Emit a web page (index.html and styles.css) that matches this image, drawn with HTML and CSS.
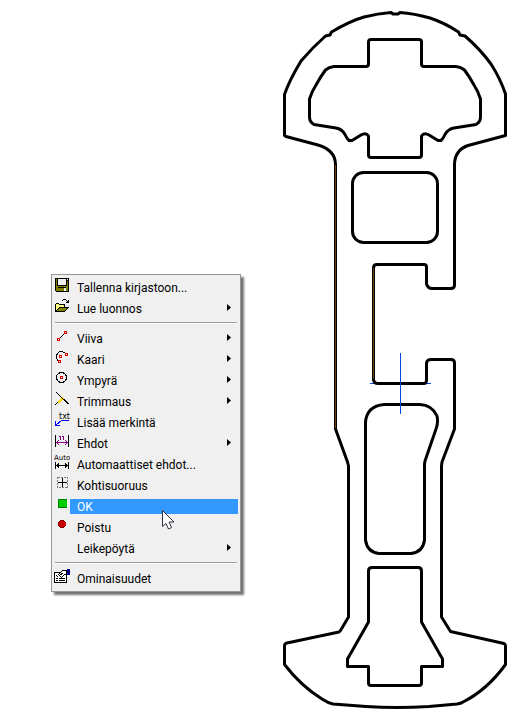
FILE: index.html
```html
<!DOCTYPE html>
<html lang="fi">
<head>
<meta charset="UTF-8">
<meta name="viewport" content="width=device-width, initial-scale=1.0">
<title>Luonnos</title>
<link rel="stylesheet" href="styles.css">
</head>
<body>
<main class="workspace">
    <div class="menu">
        <ul class="menu-list">
            <li><button type="button" class="item">
                <svg class="icon" viewBox="0 0 16 16"><path d="M1 1h14v14H2l-1-1z"/><path fill="#808000" d="M2 2h1v7h10V4h1v10H2z"/><path fill="#f0f0f0" d="M4 2h8v6H4zM13 2h1v1h-1zM10 11h2v3h-2z"/><path d="M4 10h8v1H4z"/></svg>
                <span class="label">Tallenna kirjastoon...</span>
            </button></li>
            <li><button type="button" class="item">
                <svg class="icon" viewBox="0 0 16 16"><path d="M1 6h1V5h3v1h6v3h4v1h-1v1h-1v1h-1v1h-1v1H1z"/><path fill="#ffff80" d="M2 6h3v1h5v2H5v1H4v1H3v1H2z"/><path fill="#808000" d="M5 10h8v1h-1v1h-1v1H3v-1h1v-1h1z"/><path d="M8 2h1V1h3v1h1v1h1V2h1v3h-3V4h1V3h-1V2H9v1H8z"/></svg>
                <span class="label">Lue luonnos</span>
                <svg class="arrow" viewBox="0 0 4 7"><path d="M0 0l4 3.500L0 7z"/></svg>
            </button></li>
            <li class="separator"></li>
            <li><button type="button" class="item">
                <svg class="icon" viewBox="0 0 16 16"><path class="line" d="M6 10l4-4"/><path class="node" d="M10.500 3.500h2v2h-2zM3.500 10.500h2v2h-2z"/></svg>
                <span class="label">Viiva</span>
                <svg class="arrow" viewBox="0 0 4 7"><path d="M0 0l4 3.500L0 7z"/></svg>
            </button></li>
            <li><button type="button" class="item">
                <svg class="icon" viewBox="0 0 16 16"><path class="line" d="M4 11.500L2.500 9V6L5 3l3-.5L11 4"/><path class="node" d="M11.500 4.500h2v2h-2zM5.500 6.500h2v2h-2zM4.500 11.500h2v2h-2z"/></svg>
                <span class="label">Kaari</span>
                <svg class="arrow" viewBox="0 0 4 7"><path d="M0 0l4 3.500L0 7z"/></svg>
            </button></li>
            <li><button type="button" class="item">
                <svg class="icon" viewBox="0 0 16 16"><circle class="line" cx="7.500" cy="7.500" r="5"/><path class="node" d="M6.500 6.500h2v2h-2z"/></svg>
                <span class="label">Ympyrä</span>
                <svg class="arrow" viewBox="0 0 4 7"><path d="M0 0l4 3.500L0 7z"/></svg>
            </button></li>
            <li><button type="button" class="item">
                <svg class="icon" viewBox="0 0 16 16"><path stroke="#ffd800" stroke-width="2" d="M4 12l5-5"/><path class="line" d="M2.500 1.500l12 11.500M1 14l3-3"/></svg>
                <span class="label">Trimmaus</span>
                <svg class="arrow" viewBox="0 0 4 7"><path d="M0 0l4 3.500L0 7z"/></svg>
            </button></li>
            <li><button type="button" class="item">
                <svg class="icon" viewBox="0 0 16 16"><text class="tiny" x="5" y="7">txt</text><path class="blue" d="M15 8.500H7.500L2 13M1.500 9v4.500H6"/></svg>
                <span class="label">Lisää merkintä</span>
            </button></li>
            <li><button type="button" class="item">
                <svg class="icon" viewBox="0 0 16 16"><path class="line" d="M1.500 2v12M14.500 2v12"/><path class="purple" d="M2 9.500h12M5 7L2.500 9.500 5 12M11 7l2.500 2.500L11 12M5 3.500h1.500V7M8 3.500h1.500V7"/></svg>
                <span class="label">Ehdot</span>
                <svg class="arrow" viewBox="0 0 4 7"><path d="M0 0l4 3.500L0 7z"/></svg>
            </button></li>
            <li><button type="button" class="item">
                <svg class="icon" viewBox="0 0 16 16"><text class="tiny wide" x="0" y="6">Auto</text><path class="line" d="M1.500 8v7M14.500 8v7M2 11.500h12M5 9.500l-2 2 2 2M11 9.500l2 2-2 2"/></svg>
                <span class="label">Automaattiset ehdot...</span>
            </button></li>
            <li><button type="button" class="item">
                <svg class="icon" viewBox="0 0 16 16"><path class="dashed" d="M3.500 2.500h10v10h-10z"/><path class="line" d="M8.500 3v9M4 7.500h9"/></svg>
                <span class="label">Kohtisuoruus</span>
            </button></li>
            <li><button type="button" class="item selected">
                <svg class="icon" viewBox="0 0 16 16"><path fill="#008000" d="M4 3h9v9H4z"/><path fill="#00cc00" d="M5 4h8v7H5z"/></svg>
                <span class="label">OK</span>
            </button></li>
            <li><button type="button" class="item">
                <svg class="icon" viewBox="0 0 16 16"><path fill="#800000" d="M6 3h4v1h1v1h1v4h-1v1h-1v1H6v-1H5V9H4V5h1V4h1z"/><path fill="#cc0000" d="M6 4h4v1h2v4h-1v1H6V9H5V5h1z"/></svg>
                <span class="label">Poistu</span>
            </button></li>
            <li><button type="button" class="item">
                <span class="icon"></span>
                <span class="label">Leikepöytä</span>
                <svg class="arrow" viewBox="0 0 4 7"><path d="M0 0l4 3.500L0 7z"/></svg>
            </button></li>
            <li class="separator"></li>
            <li><button type="button" class="item">
                <svg class="icon" viewBox="0 0 16 16"><path fill="#fff" stroke="#000" d="M.5 4.500h12v10H.5z"/><path class="line" d="M2 10.500h2M5 10.500h6M2 12.500h2M5 12.500h6M2 7l2 2"/><path fill="#fff" stroke="#000" d="M4.500 6.500l4-4h4v4h-2l-3 3z"/><path class="line" d="M6 7l3-2"/><path fill="#000080" d="M13 1h3v6h-3z"/></svg>
                <span class="label">Ominaisuudet</span>
            </button></li>
        </ul>
        <svg class="pointer" viewBox="0 0 13 20" aria-hidden="true"><path d="M.5.5v16l3.500-3 2.500 5.500 3-1.500L7 12h5z"/></svg>
    </div>

    <svg class="drawing" viewBox="276 0 240 719" role="img" aria-label="Profiili">
        <path class="axis" d="M370 383.500h61"/>
        <!-- outer contour -->
        <path class="contour" d="M284.500 94.500Q289 81 301 61Q312 48 325.500 36L330 35L331.500 32Q350 21 364 17Q378 13.500 391 12.500L393 14H398L400 12.500Q414 13.500 430 18Q445 23 458.500 32L460 35L465 36Q480 49 491 64Q500 78 505.500 94V135.500L468 145.500Q455 150 454.500 164V285Q454.500 288.500 451 288.500H432Q428 288.500 426.500 284V267Q426.500 264.500 424 264.500H377Q373.500 264.500 373.500 268V380Q374 383.500 378 383.500H424Q426.500 383.500 426.500 380V363Q427 359.500 431 359.500H451Q454.500 359.500 454.500 363V429L442 462L441.500 466V617L450.500 631.500L504 643.500Q505.500 644 505.500 646V664.500Q487 690 463 702Q461 703.500 457 704L429 706.500Q396 708.500 366 706.500L333 704Q328 703 322 699Q301 686 284.500 664.500V646Q284.500 643.500 287 643L339 632L340.500 630.500L348.500 617V466L347.500 462L335.500 429V164Q335 150 318 145L286 136.500L284.500 135.500Z"/>
        <!-- top cavity -->
        <path class="contour" d="M371 39.500H419Q421.500 39.500 421.500 42V64Q421.500 66.500 424 66.500H456Q461 67 464.500 70Q469 76 474 85Q478 91 480.500 99V117Q480.500 122 476 124.500L454 128Q448 129 445 134.500Q443 139 441 140.500H438L429 135Q424 132 421.500 136V155Q421.500 157.500 419 157.500H371Q368.500 157.500 368.500 155V136Q366 132 361 135L352 140.500H349Q347 139 345 134.500Q342 129 336 128L314 124.500Q309.500 122 309.500 117V99Q312 91 316 85Q321 76 325.500 70Q329 67 334 66.500H366Q368.500 66.500 368.500 64V42Q368.500 39.500 371 39.500Z"/>
        <rect class="contour" x="352.500" y="172.500" width="85" height="70" rx="11"/>
        <!-- slot -->
        <path class="contour" d="M384 404.500H420Q432 405 437 416Q438.500 422 436 429L425 461L424.500 464V540Q423 552 411 553.500H379Q367 552 365.500 540V422Q367 406 384 404.500Z"/>
        <!-- bottom cavity -->
        <path class="contour" d="M372 567.500H418Q421.500 567.500 421.500 571V622L442.500 659V666.500H421.500V683Q421.500 685.500 419 685.500H371Q368.500 685.500 368.500 683V666.500H347.500V659L368.500 622V571Q368.500 567.500 372 567.500Z"/>
        <path class="picked" d="M335.500 165v263M373.500 268v111"/>
        <path class="axis" d="M400.500 353v61"/>
    </svg>
</main>
</body>
</html>
```
FILE: styles.css
```css
body {
    margin: 0;
    background: #fff;
    font-family: Roboto, "Open Sans", sans-serif;
    font-size: 12px;
    color: #000;
}

.workspace {
    display: flex;
    justify-content: space-between;
    align-items: flex-start;
}

.menu {
    position: relative;
    box-sizing: border-box;
    width: 190px;
    margin: 274px 0 0 51px;
    padding: 2px 0;
    border: 1px solid #979797;
    background: #f0f0f0;
    box-shadow: 3px 3px 2px rgba(0, 0, 0, 0.55);
}

.menu-list {
    list-style: none;
    margin: 0;
    padding: 0;
}

.item {
    display: flex;
    align-items: flex-start;
    width: 100%;
    height: 21px;
    padding: 0 2px;
    border: 0;
    background: none;
    font: inherit;
    color: inherit;
    text-align: left;
}

.icon {
    flex: none;
    width: 16px;
    height: 16px;
    shape-rendering: crispEdges;
}

.label {
    flex: 1;
    height: 15px;
    margin-top: 3px;
    padding-left: 7px;
    line-height: 17px;
    white-space: nowrap;
}

.selected .label {
    background: #3399ff;
    color: #fff;
}

.arrow {
    flex: none;
    width: 4px;
    height: 7px;
    margin: 6px 7px 0 0;
}

.separator {
    height: 1px;
    margin: 3px 3px 4px;
    border-top: 1px solid #a0a0a0;
    background: #fff;
}

.line { fill: none; stroke: #000; }
.node { fill: #fff; stroke: #d00000; }
.blue { fill: none; stroke: #0000ff; }
.purple { fill: none; stroke: #800080; }
.dashed { fill: none; stroke: #808080; stroke-dasharray: 2 1; }
.tiny { font: 8px "DejaVu Sans", sans-serif; }
.wide { font-size: 7px; }

.pointer {
    position: absolute;
    left: 110px;
    top: 235px;
    width: 13px;
    height: 20px;
    fill: #fff;
    stroke: #303040;
}

.drawing {
    flex: none;
    width: 240px;
}

.contour {
    fill: none;
    stroke: #000;
    stroke-width: 3px;
    stroke-linejoin: round;
}

.picked { stroke: #6b4000; }
.axis { stroke: #0048e0; }
```
